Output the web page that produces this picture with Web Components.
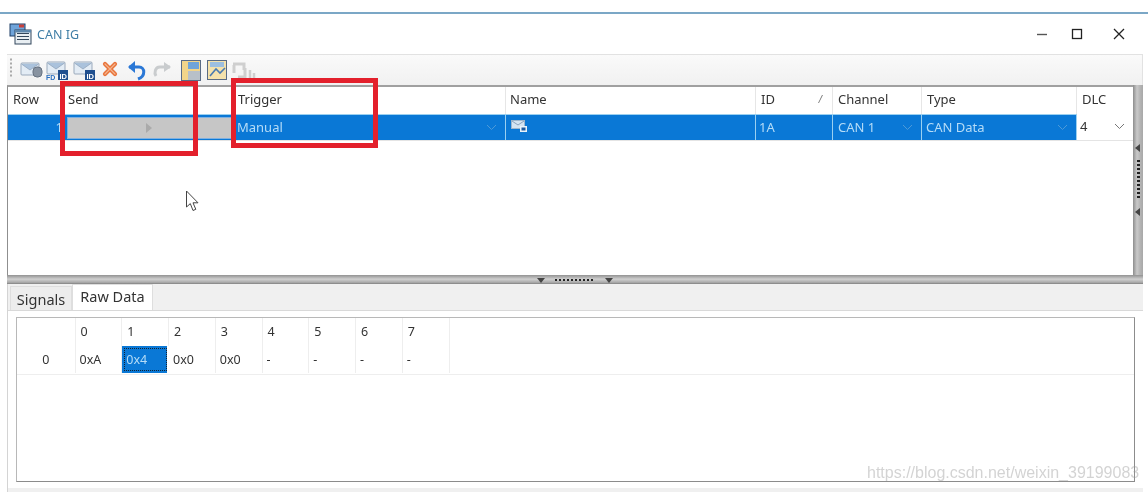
<!DOCTYPE html>
<html>
<head>
<meta charset="utf-8">
<title>CAN IG</title>
<style>
html, body { margin: 0; padding: 0; background: #fff; overflow: hidden; }
body { font-family: "Noto Sans", "Liberation Sans", sans-serif; font-size: 13px; color: #333; }
</style>
</head>
<body>
<can-window>
  <title-bar slot="title" label="CAN IG"></title-bar>
  <tool-bar slot="tools"></tool-bar>
  <msg-table slot="table"></msg-table>
  <tab-strip slot="tabs"></tab-strip>
  <raw-grid slot="grid"></raw-grid>
</can-window>

<script>
// shared little envelope used by the toolbar
const envelope = (x, y) => `
  <g transform="translate(${x} ${y})">
    <rect x="0" y="0" width="18" height="12" rx="1" fill="#e3ecf5" stroke="#9aa9bb"/>
    <path d="M0.5 1 L9 7 L17.5 1" fill="#aac2dc" stroke="#93a6bc" stroke-width=".8"/>
  </g>`;

class CanWindow extends HTMLElement {
  constructor() {
    super();
    this.attachShadow({ mode: "open" });
    this.shadowRoot.innerHTML = `
<style>
:host { display: block; position: relative; width: 1148px; height: 492px; background: #fff; overflow: hidden; filter: blur(.4px); }
.topline { height: 12px; border-bottom: 2px solid #7ba7c6; }
.body { margin: 0 5px 0 7px; height: 438px; display: flex; flex-direction: column; }
.upper { display: flex; height: 190px; }
.upper ::slotted(msg-table) { flex: 1; }
.vsplit { width: 10px; background: linear-gradient(90deg, #8d8d8d, #c9c9c9 40%, #b5b5b5 70%, #a8a8a8); display: flex; flex-direction: column; align-items: center; }
.vtri { width: 0; height: 0; border-top: 4px solid transparent; border-bottom: 4px solid transparent; border-right: 5px solid #444; margin-left: -2px; }
.vdots { width: 3px; height: 38px; margin: 8px 0 10px 0; background: repeating-linear-gradient(180deg, #222 0 2px, transparent 2px 4px); }
.hsplit { height: 9px; box-sizing: border-box; flex: none; border-top: 1px solid #999; background: linear-gradient(180deg, #a0a0a0, #cfcfcf 40%, #aaaaaa 80%, #808080); display: flex; justify-content: center; align-items: center; gap: 10px; }
.htri { width: 0; height: 0; border-left: 4px solid transparent; border-right: 4px solid transparent; border-top: 5px solid #444; }
.hdots { width: 40px; height: 2px; background: repeating-linear-gradient(90deg, #222 0 2px, transparent 2px 4px); }
.lower { flex: 1; background: #f0f0f0; display: flex; flex-direction: column; border-left: 1px solid #d4d4d4; }
.panel { height: 178px; background: #fff; border-top: 1px solid #d9d9d9; padding: 6px 8px; box-sizing: border-box; }
.mark { position: absolute; box-sizing: border-box; border: 5px solid #e3202c; }
.m1 { left: 60px; top: 81px; width: 138px; height: 75px; }
.m2 { left: 231px; top: 78px; width: 147px; height: 70px; }
.cursor { position: absolute; left: 185px; top: 190px; }
.wm { position: absolute; left: 867px; top: 464px; font: 16px "Liberation Sans", sans-serif; color: rgba(150,150,150,.42); white-space: nowrap; }
</style>
<div class="topline"></div>
<slot name="title"></slot>
<div class="body">
  <slot name="tools"></slot>
  <div class="upper">
    <slot name="table"></slot>
    <div class="vsplit">
      <div class="vtri" style="margin-top:59px"></div>
      <div class="vdots"></div>
      <div class="vtri"></div>
    </div>
  </div>
  <div class="hsplit">
    <div class="htri"></div><div class="hdots"></div><div class="htri"></div>
  </div>
  <div class="lower">
    <slot name="tabs"></slot>
    <div class="panel"><slot name="grid"></slot></div>
  </div>
</div>
<div class="mark m1"></div>
<div class="mark m2"></div>
<svg class="cursor" width="16" height="24" viewBox="0 0 16 24">
  <path d="M1.5 1 V17 L5.3 13.6 L8 20.5 L10.8 19.3 L8 12.8 H13 Z" fill="#fff" stroke="#444" stroke-width="1"/>
</svg>
<div class="wm">https://blog.csdn.net/weixin_39199083</div>`;
  }
}

class TitleBar extends HTMLElement {
  constructor() {
    super();
    this.attachShadow({ mode: "open" });
    this.shadowRoot.innerHTML = `
<style>
:host { display: flex; align-items: center; height: 40px; padding: 0 0 0 9px; box-sizing: border-box; color: #3f7ea6; font-size: 12.5px; }
.label { margin-left: 5px; margin-top: 1px; }
.btns { margin-left: auto; margin-right: 23px; display: flex; gap: 23px; }
.btn { width: 12px; height: 40px; display: flex; align-items: center; }
.btn + .btn + .btn { margin-left: 7px; }
</style>
<svg width="23" height="24" viewBox="0 0 23 24">
  <rect x="1" y="2" width="15" height="12" fill="#6fa4da" stroke="#1f3f66"/>
  <rect x="10" y="2.5" width="5" height="3" fill="#c9403a"/>
  <rect x="6" y="8" width="16" height="14" fill="#e8eef2" stroke="#33475c"/>
  <path d="M8 11.5h12M8 14.5h12M8 17.5h12" stroke="#33475c"/>
  <rect x="6" y="8" width="16" height="2.5" fill="#5d87ad"/>
</svg>
<span class="label"></span>
<div class="btns">
  <div class="btn"><svg width="12" height="12"><path d="M1 6.5H11" stroke="#555" stroke-width="1.4"/></svg></div>
  <div class="btn"><svg width="12" height="12"><rect x="1.5" y="1.5" width="9" height="9" fill="none" stroke="#222" stroke-width="1.3"/></svg></div>
  <div class="btn"><svg width="12" height="12"><path d="M1 1L11 11M11 1L1 11" stroke="#222" stroke-width="1.3"/></svg></div>
</div>`;
    this.shadowRoot.querySelector(".label").textContent = this.getAttribute("label");
  }
}

class ToolBar extends HTMLElement {
  constructor() {
    super();
    this.attachShadow({ mode: "open" });
    this.shadowRoot.innerHTML = `
<style>
:host { display: block; height: 31px; box-sizing: border-box; border-top: 1px solid #e2e2e2; border-right: 1px solid #e2e2e2; background: linear-gradient(180deg, #fafafa, #f1f1f1); }
svg { display: block; }
text { font-family: "Liberation Sans", sans-serif; font-weight: bold; }
</style>
<svg width="260" height="30" viewBox="0 0 260 30">
  <path d="M4 3.5v2M4 7.5v2M4 11.5v2M4 15.5v2M4 19.5v2" stroke="#aaa" stroke-width="2" fill="none"/>
  ${envelope(14, 8)}
  <rect x="26" y="12" width="9" height="10" rx="4" fill="#8893a1" stroke="#667281"/>
  ${envelope(40, 7)}
  <text x="39" y="25" font-size="7" fill="#2a6fc0">FD</text>
  <rect x="51" y="15" width="10" height="10" fill="#1f4f8f"/>
  <text x="52.5" y="23.5" font-size="7.5" fill="#fff">ID</text>
  ${envelope(67, 7)}
  <rect x="78" y="15" width="10" height="10" fill="#1f4f8f"/>
  <text x="79.5" y="23.5" font-size="7.5" fill="#fff">ID</text>
  <path d="M98 9 L108 19 M108 9 L98 19" stroke="#e8743b" stroke-width="4.2" stroke-linecap="round"/>
  <path d="M98 9 L108 19 M108 9 L98 19" stroke="#f4b48e" stroke-width="1.2" stroke-linecap="round"/>
  <path d="M122 12 H132 C138 12 139 21 131 24" fill="none" stroke="#2b78d6" stroke-width="3"/>
  <path d="M128 6 L121 12 L128 18 Z" fill="#2b78d6"/>
  <path d="M163 12 H153 C148 12 147 18 149 21" fill="none" stroke="#c9ccce" stroke-width="3"/>
  <path d="M157 7 L164 12 L157 17 Z" fill="#c9ccce"/>
  <rect x="174.5" y="5.5" width="19" height="20" fill="#f2d58a" stroke="#5a6b85"/>
  <rect x="181" y="7" width="11" height="7" fill="#6fa4da"/><rect x="181" y="16" width="12" height="9" fill="#b8c0c8"/>
  <rect x="200.5" y="5.5" width="19" height="19" fill="#f5e2ac" stroke="#5a6b85"/>
  <path d="M203 21 L209 14 L213 18 L218 13" stroke="#4a7ab0" stroke-width="1.6" fill="none"/><rect x="203" y="7" width="14" height="5" fill="#9dbfe0"/>
  <path d="M226 9 H237 V15 M227 18 V10 M231 22 H238 V13" stroke="#cfcfcf" stroke-width="3" fill="none"/>
  <path d="M243 15 V26 M247 18 V26" stroke="#cfcfcf" stroke-width="2.5"/>
</svg>`;
  }
}

const COLS = [57, 169, 272, 250, 77, 89, 155, 56];

class MsgTable extends HTMLElement {
  constructor() {
    super();
    this.attachShadow({ mode: "open" });
    const chev = (c) => `<svg class="chev" width="11" height="7" viewBox="0 0 11 7"><path d="M1 1L5.5 5.5L10 1" fill="none" stroke="${c}" stroke-width="1"/></svg>`;
    this.shadowRoot.innerHTML = `
<style>
:host { display: block; box-sizing: border-box; background: #fff; border-top: 2px solid #a0a0a0; border-left: 1px solid #8f8f8f; overflow: hidden; }
.row { display: grid; grid-template-columns: ${COLS.map((c) => c + "px").join(" ")}; }
.head { height: 27px; }
.head div { display: flex; align-items: center; padding: 0 0 3px 4px; border-right: 1px solid #e6e6e6; box-sizing: border-box; color: #333; }
.head .first, .head .pad5 { padding-left: 5px; }
.head .send { padding-left: 3px; }
.head .id { justify-content: space-between; padding-right: 10px; padding-left: 5px; }
.slash { font-size: 10px; color: #777; font-style: italic; }
.sel { height: 27px; border-bottom: 1px solid #e4e4e4; box-sizing: border-box; }
.sel > div { display: flex; align-items: center; background: #0a78d6; color: #b5dcf7; padding: 0 0 2px 3px; border-right: 1px solid #9bd0f0; border-top: 1px solid #9bd0f0; box-sizing: border-box; position: relative; }
.sel .num { justify-content: flex-end; padding-right: 2px; border-right: 0; }
.sel .send { padding: 0; border-right: 0; }
.sel .btn { flex: 1; height: 22px; margin: 0 2px; background: #c6c6c6; border: 1px solid #7fb0e0; box-sizing: border-box; display: flex; align-items: center; justify-content: center; }
.tri { width: 0; height: 0; border-top: 5px solid transparent; border-bottom: 5px solid transparent; border-left: 6px solid #aaa; margin-right: 2px; }
.chev { position: absolute; right: 8px; top: 9px; }
.sel .dlc { background: #fff; color: #333; border: 0; }
.sel .name { padding-left: 5px; }
.sel .pad4 { padding-left: 4px; }
.sel .pad5 { padding-left: 5px; }
</style>
<div class="row head">
  <div class="first">Row</div><div class="send">Send</div><div>Trigger</div><div>Name</div>
  <div class="id">ID<span class="slash">/</span></div><div class="pad5">Channel</div><div class="pad5">Type</div><div class="pad5" style="border:0">DLC</div>
</div>
<div class="row sel">
  <div class="num">1</div>
  <div class="send"><div class="btn"><span class="tri"></span></div></div>
  <div>Manual${chev("#4d9ad8")}</div>
  <div class="name"><svg width="17" height="13" viewBox="0 0 17 13"><rect x="0.5" y="0.5" width="13" height="8" fill="#d5e4f2" stroke="#9fb6cc"/><path d="M1 1L7 5L13 1" fill="none" stroke="#8aa3bd"/><rect x="9" y="6" width="7" height="6" fill="#e8f2fa"/><rect x="10.5" y="7.5" width="4" height="3" fill="#1f5a9e"/></svg></div>
  <div>1A</div>
  <div class="pad5">CAN 1${chev("#4d9ad8")}</div>
  <div class="pad4">CAN Data${chev("#4d9ad8")}</div>
  <div class="dlc">4${chev("#777")}</div>
</div>`;
  }
}

class TabStrip extends HTMLElement {
  constructor() {
    super();
    this.attachShadow({ mode: "open" });
    this.shadowRoot.innerHTML = `
<style>
:host { display: flex; align-items: flex-end; height: 26px; padding-left: 2px; color: #333; font-size: 14.5px; }
.tab { display: flex; align-items: center; justify-content: center; box-sizing: border-box; }
.off { width: 62px; height: 24px; background: #ededed; border: 1px solid #dedede; border-bottom: 0; }
.on { width: 81px; height: 26px; background: #fff; border: 1px solid #dedede; border-bottom: 0; padding-bottom: 3px; }
</style>
<div class="tab off">Signals</div>
<div class="tab on">Raw Data</div>`;
  }
}

class RawGrid extends HTMLElement {
  constructor() {
    super();
    this.attachShadow({ mode: "open" });
    const vals = ["0xA", "0x4", "0x0", "0x0", "-", "-", "-", "-"];
    const heads = vals.map((_, i) => `<div class="c h">${i}</div>`).join("");
    const cells = vals.map((v, i) => `<div class="c d${i === 1 ? " active" : ""}">${v}</div>`).join("");
    this.shadowRoot.innerHTML = `
<style>
:host { display: block; height: 165px; box-sizing: border-box; border: 1px solid #8c8c8c; border-top-color: #b8b8b8; border-left-color: #b8b8b8; background: #fff; }
.g { display: grid; grid-template-columns: 58.5px repeat(8, 46.75px) 1fr; grid-template-rows: 28px 27px; border-bottom: 1px solid #eee; height: 56px; }
.rh { grid-row: 2; grid-column: 1; display: flex; align-items: center; justify-content: center; font-size: 12.5px; border-right: 1px solid #eee; }
.tl { border-right: 1px solid #eee; }
.c { display: flex; align-items: center; padding-left: 4px; border-right: 1px solid #eee; box-sizing: border-box; font-size: 12.5px; }
.h { padding-left: 5px; padding-bottom: 2px; }
.d { color: #333; }
.active { background: #0a78d6; background-clip: padding-box; border-right: 2px solid #fff; color: #b5dcf7; outline: 1px dotted #123; outline-offset: -3px; }
</style>
<div class="g">
  <div class="tl"></div>${heads}<div></div>
  <div class="rh">0</div>${cells}<div></div>
</div>`;
  }
}

window.customElements.define("can-window", CanWindow);
window.customElements.define("title-bar", TitleBar);
window.customElements.define("tool-bar", ToolBar);
window.customElements.define("msg-table", MsgTable);
window.customElements.define("tab-strip", TabStrip);
window.customElements.define("raw-grid", RawGrid);
</script>
</body>
</html>
